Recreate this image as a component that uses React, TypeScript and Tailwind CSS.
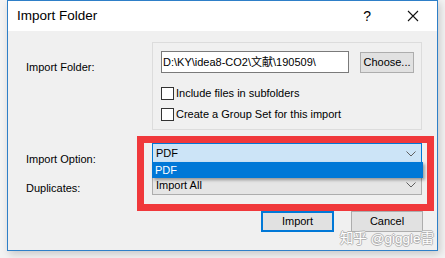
import React from "react";

const font = { fontFamily: '"Liberation Sans", "Noto Sans CJK SC", sans-serif' };

function Chevron() {
  return (
    <svg width="10" height="6" viewBox="0 0 10 6" className="block">
      <path d="M0.5 0.5 L5 5 L9.5 0.5" fill="none" stroke="#606060" strokeWidth="1" />
    </svg>
  );
}

function Checkbox({ label }: { label: string }) {
  return (
    <div className="flex items-center h-[13px]">
      <div className="w-[13px] h-[13px] bg-white border border-[#333333]" />
      <span className="ml-[2px] text-[11px] leading-[13px] text-black">{label}</span>
    </div>
  );
}

export default function App() {
  return (
    <div className="w-[445px] h-[258px] bg-[#f3f3f3] relative overflow-hidden" style={font}>
      <div className="absolute left-[7px] top-0 w-[431px] h-[251px] border border-[#2e7fc8] bg-[#f0f0f0] shadow-[2px_3px_8px_rgba(0,0,0,0.18)] flex flex-col">
        {/* Title bar */}
        <div className="h-[30px] bg-white flex items-center shrink-0">
          <span className="ml-[9px] text-[13.5px] text-black leading-none">Import Folder</span>
          <div className="flex-1" />
          <span className="text-[14px] text-black leading-none mr-[36px]">?</span>
          <svg width="12" height="12" viewBox="0 0 12 12" className="mr-[18px]">
            <path d="M1 1 L11 11 M11 1 L1 11" stroke="#111" strokeWidth="1.1" />
          </svg>
        </div>
        {/* Content */}
        <div className="flex flex-col pt-[11px] pl-[18px] pr-[14px]">
          <div className="flex items-start h-[88px]">
            <div className="w-[126px] pt-[18px] text-[11px] leading-[14px] text-black">Import Folder:</div>
            <div className="w-[270px] h-[88px] border border-[#dcdcdc] pt-[8px] pl-[8px] flex flex-col">
              <div className="flex items-start">
                <div className="w-[188px] h-[22px] bg-white border border-[#7a7a7a] flex items-center pl-[1px] text-[11px] text-black leading-none whitespace-nowrap overflow-hidden">
                  D:\KY\idea8-CO2\文献\190509\
                </div>
                <div className="ml-[11px] mt-[1px] w-[54px] h-[21px] bg-[#e1e1e1] border border-[#adadad] flex items-center justify-center text-[11px] text-black leading-none">
                  Choose...
                </div>
              </div>
              <div className="mt-[14px] flex flex-col gap-[8px]">
                <Checkbox label="Include files in subfolders" />
                <Checkbox label="Create a Group Set for this import" />
              </div>
            </div>
          </div>
          <div className="flex items-start mt-[13px] h-[21px]">
            <div className="w-[126px] pt-[9px] text-[11px] leading-[14px] text-black">Import Option:</div>
            <div className="w-[270px] h-[21px] bg-[#cce4f7] border border-[#0078d7] flex items-center pl-[3px] pr-[5px] text-[11px] text-black leading-none">
              <span className="flex-1">PDF</span>
              <Chevron />
            </div>
          </div>
          <div className="flex items-start mt-[10px] h-[21px]">
            <div className="w-[126px] pt-[7px] text-[11px] leading-[14px] text-black">Duplicates:</div>
            <div className="w-[270px] h-[21px] bg-[#e5e5e5] border border-[#adadad] flex items-center pl-[3px] pr-[5px] pt-[1px] text-[11px] text-black leading-none">
              <span className="flex-1">Import All</span>
              <Chevron />
            </div>
          </div>
          <div className="flex justify-end mt-[16px] gap-[17px]">
            <div className="w-[73px] h-[21px] bg-[#e1e1e1] border-2 border-[#0078d7] flex items-center justify-center text-[11px] text-black leading-none">
              Import
            </div>
            <div className="w-[72px] h-[21px] bg-[#e1e1e1] border border-[#adadad] flex items-center justify-center text-[11px] text-black leading-none">
              Cancel
            </div>
          </div>
        </div>
        {/* Dropdown list overlay */}
        <div className="absolute left-[144px] top-[161px] w-[271px] h-[16px] bg-[#0078d7] shadow-[2px_2px_3px_rgba(0,0,0,0.35)] flex items-center pl-[3px] text-[11px] text-white leading-none">
          PDF
        </div>
        {/* Red annotation box */}
        <div className="absolute left-[129px] top-[135px] w-[297px] h-[75px] border-[7px] border-[#f0383b]" />
        {/* Watermark */}
        <div
          className="absolute left-[332px] top-[231px] text-[13.5px] leading-none text-white whitespace-nowrap"
          style={{ textShadow: "1px 0 0 #b4b4b4, -1px 0 0 #b4b4b4, 0 1px 0 #b4b4b4, 0 -1px 0 #b4b4b4" }}
        >
          知乎 @giggle雷
        </div>
      </div>
    </div>
  );
}
